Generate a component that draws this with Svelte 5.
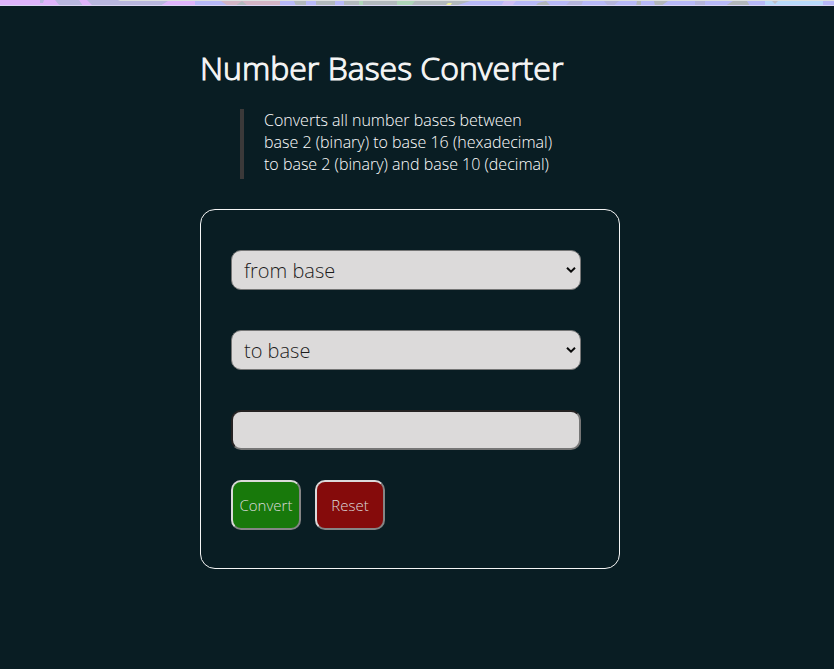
<script>
  const bases = Array.from({ length: 15 }, (_, i) => i + 2);
  const targets = [2, 10];
  let from = $state('');
  let to = $state('');
  let value = $state('');
  function reset() {
    from = '';
    to = '';
    value = '';
  }
</script>

{#snippet chevron()}
  <svg class="chevron" width="10" height="6" viewBox="0 0 10 6" aria-hidden="true">
    <path d="M1 0.8L5 4.6L9 0.8" fill="none" stroke="#0a0a0a" stroke-width="2" />
  </svg>
{/snippet}

<div class="page">
  <svg class="strip" viewBox="0 0 834 6" preserveAspectRatio="none" aria-hidden="true">
    <rect width="834" height="6" fill="#b8b9f8" />
    <rect width="195" height="6" fill="#dfb4fb" />
    <path d="M55 0H79L83 6H60ZM87 0H175L162 5H92ZM40 0H44L43 3H40Z" fill="#b9b7df" />
    <path d="M160 6L168 1H195V6Z" fill="#dfb4fb" />
    <path d="M221 1H280V6H228Z" fill="#d3b5c5" />
    <path d="M235 6L242 1 248 6ZM294 1H306V6H296ZM316 1H335V6H316ZM344 1H470L455 6H344Z" fill="#b2b9bd" />
    <path d="M565 6L570 1H583L581 6ZM604 1H619L613 6H608ZM695 1H705V6H695Z" fill="#b5b5dc" />
    <path d="M359 1H363V6H359ZM397 1H415L411 6H397Z" fill="#aed5b8" />
    <path d="M504 1H516L512 6H501Z" fill="#d0bff5" />
    <path d="M538 3L546 1 551 6H535ZM637 1H641V6H636ZM654 1H668L661 6H655ZM725 6L733 1H747L750 6Z" fill="#b3b7bb" />
    <rect x="765" width="58" height="6" fill="#b9dafb" />
    <path d="M772 1H778L775 4Z" fill="#c0bec8" />
    <path d="M446 5L448 3H452L450 6Z" fill="#eeee99" />
    <path d="M118 0H834V1H120Z" fill="#dde0df" />
    <rect y="5" width="834" height="1" fill="#d9d5f2" />
  </svg>

  <main>
    <h1>Number Bases Converter</h1>
    <blockquote>
      Converts all number bases between<br />
      base 2 (binary) to base 16 (hexadecimal)<br />
      to base 2 (binary) and base 10 (decimal)
    </blockquote>

    <form onsubmit={(e) => e.preventDefault()}>
      <div class="field">
        <select bind:value={from} aria-label="from base">
          <option value="">from base</option>
          {#each bases as b}<option value={b}>{b}</option>{/each}
        </select>
        {@render chevron()}
      </div>
      <div class="field">
        <select bind:value={to} aria-label="to base">
          <option value="">to base</option>
          {#each targets as b}<option value={b}>{b}</option>{/each}
        </select>
        {@render chevron()}
      </div>
      <input type="text" bind:value aria-label="number" />
      <div class="actions">
        <button class="convert" type="submit">Convert</button>
        <button class="reset" type="button" onclick={reset}>Reset</button>
      </div>
    </form>
  </main>
</div>

<style>
  :global(body) {
    background: #091d23;
  }
  .page {
    box-sizing: border-box;
    min-height: 669px;
    background: #091d23;
    color: #fff;
    font-family: 'Open Sans', sans-serif;
    font-weight: 300;
  }
  .strip {
    display: block;
    width: 100%;
    height: 6px;
  }
  main {
    width: 420px;
    margin-left: 200px;
    padding-top: 39px;
  }
  h1 {
    margin: 0;
    color: #f5f5f5;
    font-size: 32px;
    line-height: 46px;
    font-weight: 300;
    -webkit-text-stroke: 1.1px #f5f5f5;
    white-space: nowrap;
  }
  blockquote {
    box-sizing: border-box;
    height: 70px;
    margin: 18px 0 30px 40px;
    padding-left: 20px;
    border-left: 4px solid #3b3939;
    font-size: 16px;
    line-height: 22px;
    white-space: nowrap;
  }
  form {
    box-sizing: border-box;
    display: flex;
    flex-direction: column;
    height: 360px;
    padding: 40px 30px;
    border: 1px solid #f5f5f5;
    border-radius: 15px;
  }
  .field {
    display: grid;
    flex: none;
    width: 350px;
    height: 40px;
    margin-bottom: 40px;
  }
  select,
  .chevron {
    grid-area: 1 / 1;
  }
  .chevron {
    place-self: center end;
    margin-right: 5px;
    pointer-events: none;
  }
  select,
  input {
    box-sizing: border-box;
    flex: none;
    width: 350px;
    height: 40px;
    margin: 0;
    border-radius: 10px;
    background-color: #dcdada;
    color: #1c1c1c;
    font: 300 20px 'Open Sans', sans-serif;
  }
  select {
    appearance: none;
    padding: 0 20px 0 12px;
    border: 1px solid #767676;
  }
  input {
    margin-bottom: 30px;
    padding: 1px 8px;
    border: 2px solid;
    border-color: #252222 #767676 #767676 #252222;
  }
  .actions {
    display: flex;
    flex: none;
    gap: 14px;
  }
  button {
    box-sizing: border-box;
    width: 70px;
    height: 50px;
    margin: 0;
    padding: 0;
    border: 2px solid;
    border-color: #dcdada #858585 #858585 #dcdada;
    border-radius: 10px;
    color: #dcdada;
    font: 300 15px 'Open Sans', sans-serif;
  }
  .convert {
    background: #18790b;
  }
  .reset {
    background: #850b0b;
  }
</style>
